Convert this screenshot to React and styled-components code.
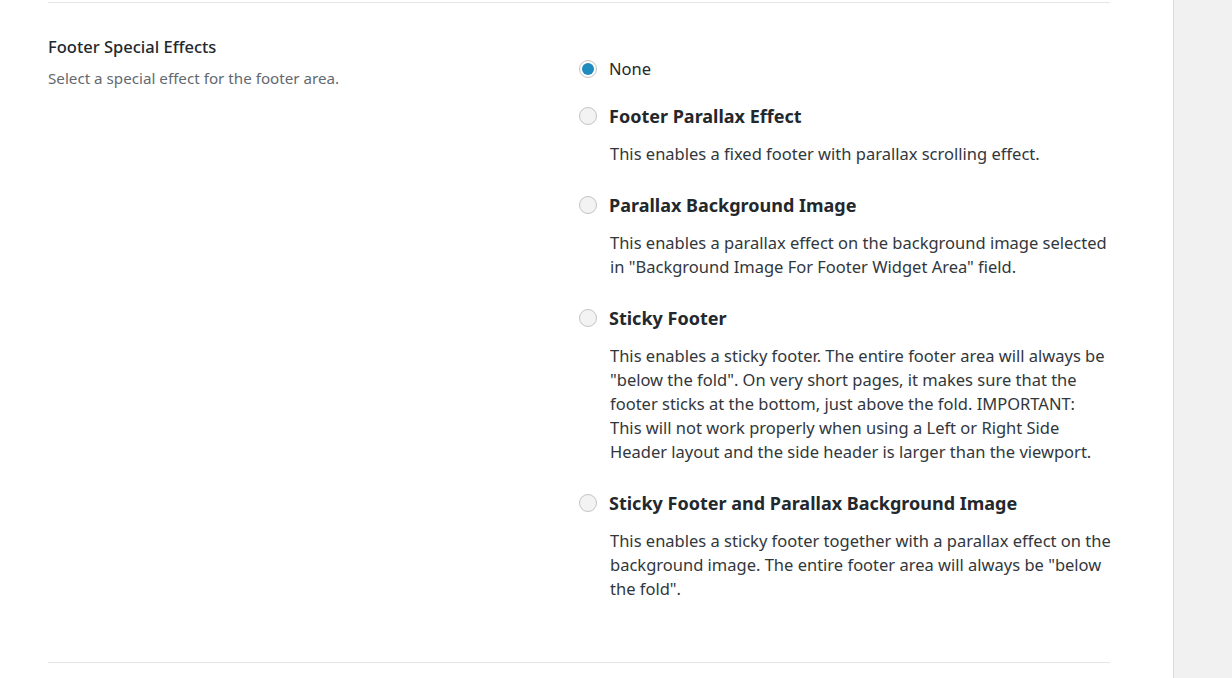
import React, { useState } from 'react';
import styled, { createGlobalStyle } from 'styled-components';

const GlobalStyle = createGlobalStyle`
    html, body {
        margin: 0;
        padding: 0;
        background: #fff;
    }
    body {
        font-family: "Noto Sans", "Open Sans", sans-serif;
        color: #32373c;
    }
`;

const Page = styled.div`
    display: flex;
    width: 100%;
    height: 678px;
    overflow: hidden;
`;

const Main = styled.div`
    flex: 1;
    padding: 2px 63px 0 48px;
`;

const Sidebar = styled.div`
    width: 58px;
    background: #f1f1f1;
    border-left: 1px solid #dcdcde;
`;

const Section = styled.div`
    display: grid;
    grid-template-columns: 531px 1fr;
    border-top: 1px solid #e5e5e5;
    border-bottom: 1px solid #e5e5e5;
    padding: 33px 0 34px;
`;

const Label = styled.div`
    h3 {
        margin: 0;
        font-size: 16.5px;
        line-height: 22px;
        font-weight: 500;
        color: #23282d;
    }
    p {
        margin: 10px 0 0;
        font-size: 15.2px;
        line-height: 20px;
        color: #646970;
    }
`;

const Options = styled.div`
    padding-top: 21px;
    display: flex;
    flex-direction: column;
`;

const Option = styled.div`
    margin-bottom: ${p => (p.$hasDesc ? '27px' : '23px')};
`;

const OptionHead = styled.label`
    display: flex;
    align-items: center;
    gap: 12px;
    cursor: pointer;
    font-size: ${p => (p.$bold ? '18px' : '16.5px')};
    font-weight: ${p => (p.$bold ? 700 : 400)};
    line-height: 24px;
    color: #23282d;
`;

const Radio = styled.span`
    width: 18px;
    height: 18px;
    box-sizing: border-box;
    border-radius: 50%;
    border: 1px solid #c3c4c7;
    background: ${p => (p.$checked ? '#fff' : '#f3f3f3')};
    display: flex;
    align-items: center;
    justify-content: center;
    flex-shrink: 0;

    &::after {
        content: '';
        width: 12px;
        height: 12px;
        border-radius: 50%;
        background: #1e8cbe;
        display: ${p => (p.$checked ? 'block' : 'none')};
    }
`;

const Desc = styled.p`
    margin: 14px -5px 0 31px;
    font-size: 16.5px;
    line-height: 24px;
    color: #32373c;
`;

const options = [
    { id: 'none', title: 'None' },
    {
        id: 'footer_parallax_effect',
        title: 'Footer Parallax Effect',
        desc: 'This enables a fixed footer with parallax scrolling effect.',
    },
    {
        id: 'parallax_bg',
        title: 'Parallax Background Image',
        desc: 'This enables a parallax effect on the background image selected in "Background Image For Footer Widget Area" field.',
    },
    {
        id: 'sticky_footer',
        title: 'Sticky Footer',
        desc: (
            <>
                This enables a sticky footer. The entire footer area will always be "below the fold". On very short
                pages, it makes sure that the footer sticks at the bottom, just above the fold. IMPORTANT:
                <br />
                This will not work properly when using a Left or Right Side Header layout and the side header is
                larger than the viewport.
            </>
        ),
    },
    {
        id: 'sticky_footer_parallax',
        title: 'Sticky Footer and Parallax Background Image',
        desc: 'This enables a sticky footer together with a parallax effect on the background image. The entire footer area will always be "below the fold".',
    },
];

const App = () => {
    const [value, setValue] = useState('none');

    return (
        <Page>
            <GlobalStyle />
            <Main>
                <Section>
                    <Label>
                        <h3>Footer Special Effects</h3>
                        <p>Select a special effect for the footer area.</p>
                    </Label>
                    <Options>
                        {options.map(o => (
                            <Option key={o.id} $hasDesc={!!o.desc}>
                                <OptionHead $bold={!!o.desc} onClick={() => setValue(o.id)}>
                                    <Radio $checked={value === o.id} />
                                    {o.title}
                                </OptionHead>
                                {o.desc && <Desc>{o.desc}</Desc>}
                            </Option>
                        ))}
                    </Options>
                </Section>
            </Main>
            <Sidebar />
        </Page>
    );
};

export default App;
